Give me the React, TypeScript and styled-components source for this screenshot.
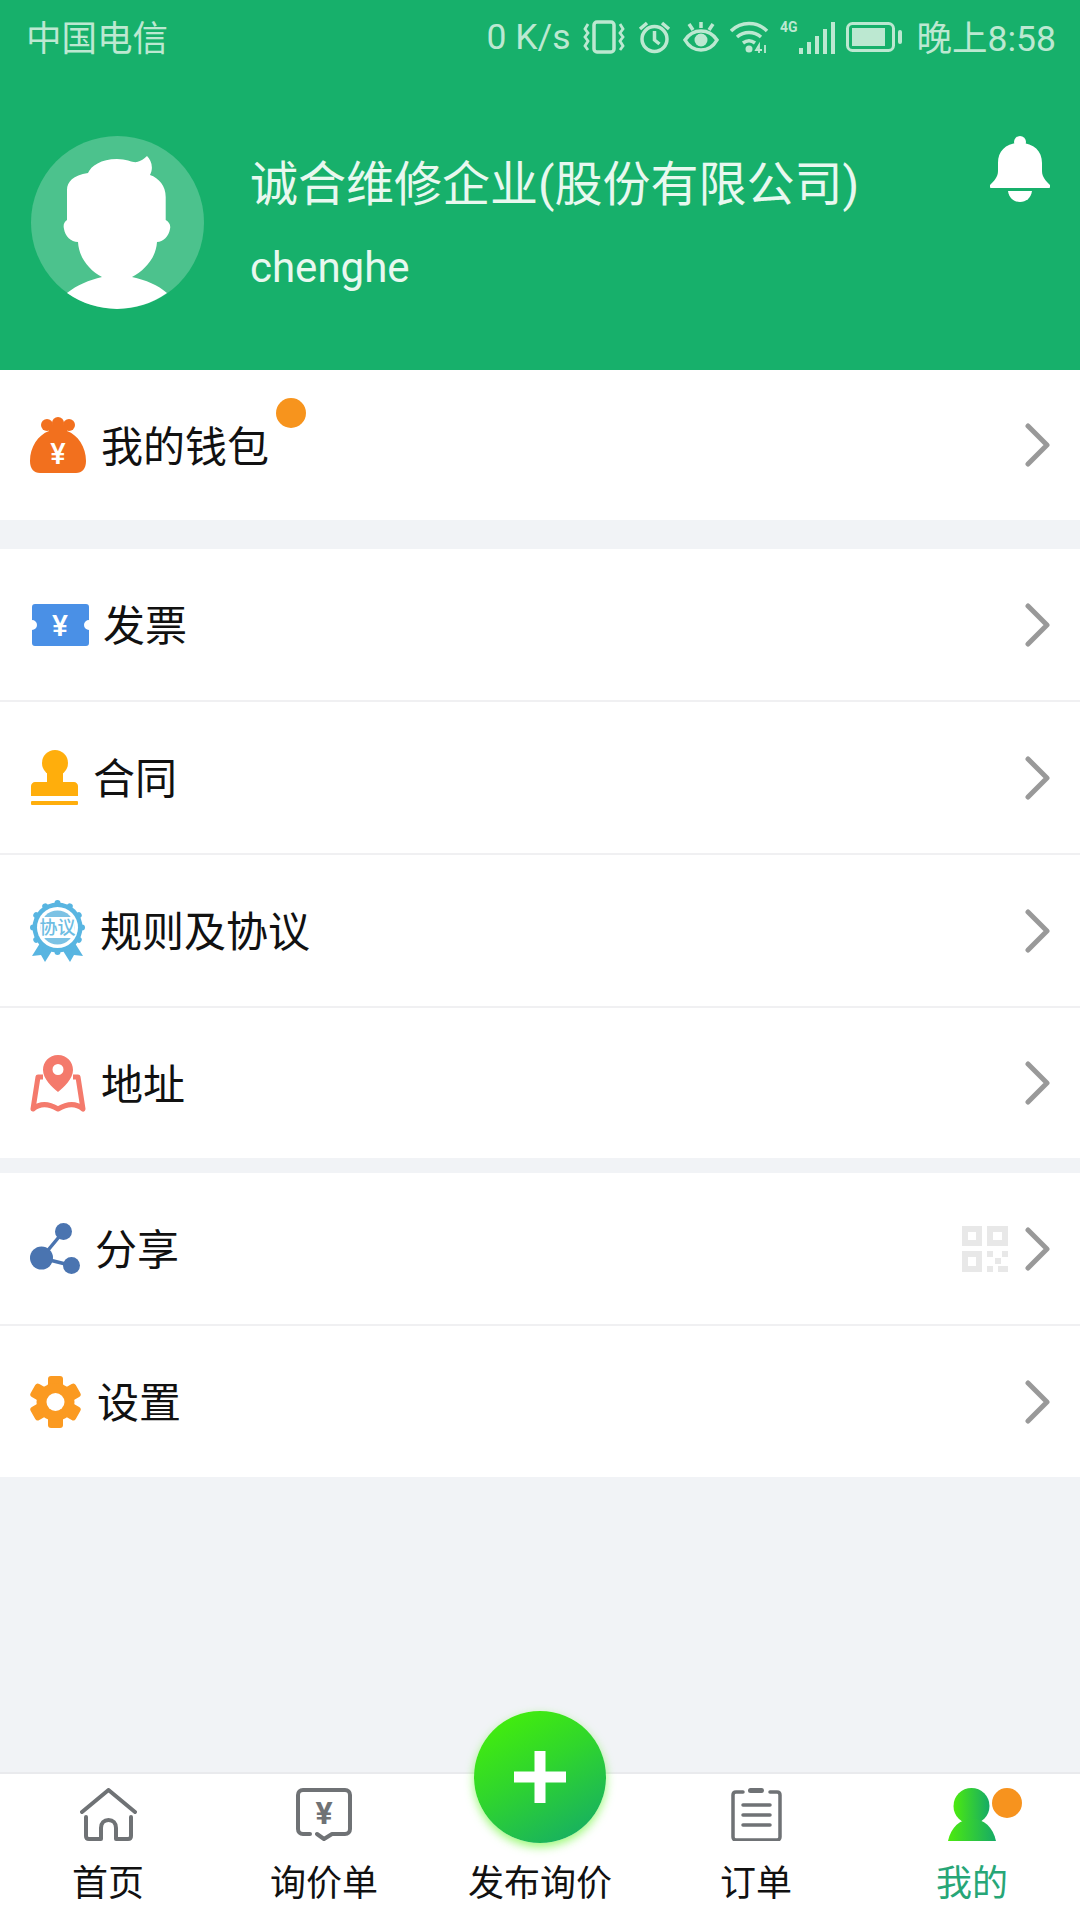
import React from "react";
import styled, { createGlobalStyle } from "styled-components";

const GlobalStyle = createGlobalStyle`
  html, body {
    margin: 0;
    padding: 0;
    background: #f1f3f6;
  }
  * {
    box-sizing: border-box;
  }
`;

const FONT = `Roboto, "Noto Sans CJK SC", sans-serif`;

const Page = styled.div`
  display: flex;
  flex-direction: column;
  width: 1080px;
  height: 1920px;
  overflow: hidden;
  background: #f1f3f6;
  font-family: ${FONT};
`;

const Header = styled.header`
  display: flex;
  flex-direction: column;
  height: 370px;
  background: #17b06b;
`;

const StatusBar = styled.div`
  display: flex;
  align-items: center;
  justify-content: space-between;
  height: 74px;
  padding: 0 24px 0 26px;
  color: #bce8d1;
  font-size: 35.5px;
`;

const StatusRight = styled.div`
  display: flex;
  align-items: center;
  gap: 11px;
`;

const Carrier = styled.span`
  padding-bottom: 4px;
`;

const Clock = styled.span`
  margin-left: 4px;
  padding-bottom: 4px;
`;

const Profile = styled.div`
  display: flex;
  align-items: flex-start;
  padding: 62px 30px 0 31px;
`;

const Names = styled.div`
  display: flex;
  flex-direction: column;
  flex: 1;
  margin-left: 46px;
  color: #e8f8ef;
`;

const CompanyName = styled.div`
  margin-top: 15px;
  font-size: 48px;
  line-height: 68px;
`;

const Account = styled.div`
  margin-top: 23px;
  font-size: 42px;
  line-height: 52px;
`;

const Group = styled.section<{ $gap: number }>`
  margin-top: ${(p) => p.$gap}px;
  background: #fff;
`;

const Row = styled.div<{ $height: number; $divider?: boolean }>`
  display: flex;
  align-items: center;
  height: ${(p) => p.$height}px;
  padding: 0 30px;
  border-bottom: ${(p) => (p.$divider ? "2px solid #f0f0f2" : "none")};
`;

const RowLabel = styled.span<{ $gap: number }>`
  position: relative;
  margin-left: ${(p) => p.$gap}px;
  padding-top: 5px;
  color: #111;
  font-size: 42px;
  line-height: 56px;
`;

const Dot = styled.i`
  position: absolute;
  top: -17px;
  right: -37px;
  width: 30px;
  height: 30px;
  border-radius: 50%;
  background: #f7941d;
`;

const RowEnd = styled.div`
  display: flex;
  align-items: center;
  gap: 17px;
  margin-left: auto;
`;

const Spacer = styled.div`
  flex: 1;
`;

const Nav = styled.nav`
  position: relative;
  display: grid;
  grid-template-columns: repeat(5, 216px);
  height: 148px;
  background: #fff;
  border-top: 2px solid #e9eaed;
`;

const NavItem = styled.div<{ $active?: boolean }>`
  display: flex;
  flex-direction: column;
  align-items: center;
  padding-top: 14px;
  color: ${(p) => (p.$active ? "#27a677" : "#111")};
  font-size: 36px;
`;

const NavIcon = styled.div`
  display: flex;
  justify-content: center;
  height: 53px;
`;

const NavLabel = styled.span`
  margin-top: 19px;
  line-height: 48px;
`;

const Fab = styled.div`
  position: absolute;
  top: -63px;
  left: 474px;
  display: flex;
  align-items: center;
  justify-content: center;
  width: 132px;
  height: 132px;
  border-radius: 50%;
  background: linear-gradient(150deg, #48f404 0%, #30d62c 45%, #12a86c 100%);
  box-shadow: 0 4px 10px rgba(90, 245, 30, 0.6);
`;

const PersonWrap = styled.div`
  position: relative;
  width: 48px;
  height: 53px;
`;

const PersonDot = styled.i`
  position: absolute;
  top: 0;
  left: 44px;
  width: 30px;
  height: 30px;
  border-radius: 50%;
  background: #f7931e;
`;

const Vibrate = () => (
  <svg width="44" height="34" viewBox="0 0 44 34" fill="none" stroke="#bce8d1" strokeWidth="3.5">
    <rect x="12" y="2" width="20" height="30" rx="3" />
    <path d="M6 4 3 9l3 4-3 4 3 4-3 5 3 4M38 4l3 5-3 4 3 4-3 4 3 5-3 4" strokeWidth="2.8" />
  </svg>
);

const Alarm = () => (
  <svg width="35" height="34" viewBox="0 0 35 34" fill="none" stroke="#bce8d1" strokeWidth="3.5">
    <circle cx="17.5" cy="19" r="12.5" />
    <path d="M17.5 11v9l5 4M3 9l7-6M32 9l-7-6" />
  </svg>
);

const Eye = () => (
  <svg width="36" height="34" viewBox="0 0 36 34" fill="none" stroke="#bce8d1" strokeWidth="3.5">
    <path d="M2 20c4-6 9-9 16-9s12 3 16 9c-4 7-9 10-16 10S6 27 2 20Z" />
    <circle cx="18" cy="20" r="6.5" fill="#bce8d1" stroke="none" />
    <path d="M6 4l4 6M30 4l-4 6M18 2v6" />
  </svg>
);

const Wifi = () => (
  <svg width="39" height="34" viewBox="0 0 39 34" fill="none" stroke="#bce8d1" strokeWidth="3.5">
    <path d="M1 11C11 1 27 1 37 11M7 17c7-6 17-6 24 0M13 23c4-3 8-3 12 0" />
    <circle cx="19" cy="29" r="3.5" fill="#bce8d1" stroke="none" />
    <path d="M29 33v-8l-3 5h6M35 25v8" strokeWidth="1.8" />
  </svg>
);

const Signal = () => (
  <svg width="55" height="34" viewBox="0 0 55 34" fill="#bce8d1">
    <text x="0" y="12" fontSize="14" fontWeight="700" fontFamily="Roboto, sans-serif">4G</text>
    <rect x="19" y="28" width="4" height="6" />
    <rect x="27" y="22" width="4" height="12" />
    <rect x="35" y="16" width="4" height="18" />
    <rect x="43" y="9" width="4" height="25" />
    <rect x="51" y="2" width="4" height="32" />
  </svg>
);

const Battery = () => (
  <svg width="56" height="30" viewBox="0 0 56 30" fill="none" stroke="#bce8d1" strokeWidth="3">
    <rect x="1.5" y="1.5" width="46" height="27" rx="5" />
    <rect x="6" y="6" width="33" height="18" fill="#bce8d1" stroke="none" />
    <rect x="52" y="8" width="4" height="14" rx="2" fill="#bce8d1" stroke="none" />
  </svg>
);

const Avatar = () => (
  <svg width="173" height="173" viewBox="0 0 173 173">
    <circle cx="86.5" cy="86.5" r="86.5" fill="#4cc28d" />
    <path
      d="M36 84V54C36 46 42 39 57 37C60 30 70 23 86 23C96 23 102 27 106 26C110 25 113 23 116 20C120 24 123 31 119 39C128 42 134.7 50 134.7 61V84C138 86 140 89 139 93C138 100 132 106 126 106C125 122 114 134 101 141C115 144 127 149 136 157A86.5 86.5 0 0 1 36 157C46 149 58 144 71 141C58 134 48 122 47 106C40 106 34 100 33 93C32 89 33 86 36 84Z"
      fill="#fff"
    />
  </svg>
);

const Bell = () => (
  <svg width="60" height="66" viewBox="0 0 60 66" fill="#fff">
    <circle cx="30" cy="6" r="6" />
    <path d="M30 7C16 7 8 15 8 27v8c0 6-4 10-8 14-1 2 0 3 2 3h56c2 0 3-1 2-3-4-4-8-8-8-14v-8C52 15 44 7 30 7Z" />
    <path d="M18 55h24c-1 7-6 11-12 11s-11-4-12-11Z" />
  </svg>
);

const YenText = ({ x, y, size, fill }: { x: number; y: number; size: number; fill: string }) => (
  <text x={x} y={y} fontSize={size} fontWeight="500" fill={fill} textAnchor="middle" fontFamily="Roboto, sans-serif">
    ¥
  </text>
);

const WalletIcon = () => (
  <svg width="56" height="56" viewBox="0 0 56 56" fill="#f2701e">
    <circle cx="17" cy="8" r="6" />
    <circle cx="28" cy="6" r="6" />
    <circle cx="39" cy="8" r="6" />
    <path d="M18 8h20l-1 6c11 4 19 16 19 30 0 8-4 12-10 12H10C4 56 0 52 0 44c0-14 8-26 19-30Z" />
    <YenText x={28} y={47} size={29} fill="#fff" />
  </svg>
);

const InvoiceIcon = () => (
  <svg width="59" height="42" viewBox="-2 0 59 42" fill="#4a90e6">
    <path d="M3 0h51c2 0 3 1 3 3v13a5 5 0 0 0 0 10v13c0 2-1 3-3 3H3c-2 0-3-1-3-3V26a5 5 0 0 0 0-10V3c0-2 1-3 3-3Z" />
    <YenText x={28} y={32} size={30} fill="#fff" />
  </svg>
);

const StampIcon = () => (
  <svg width="48" height="55" viewBox="-1 0 48 55" fill="#ffae0c">
    <circle cx="24" cy="13" r="13" />
    <path d="M16 20h16v12h11c2 0 4 2 4 4v10H0V36c0-2 2-4 4-4h12Z" />
    <rect y="51" width="47" height="4" rx="1" />
  </svg>
);

const scallops = Array.from({ length: 12 }, (_, i) => i * 30);

const RuleIcon = () => (
  <svg width="55" height="62" viewBox="0 0 55 62">
    <path d="M12 40 2 56l9-1 4 7 10-16ZM43 40l10 16-9-1-4 7-10-16Z" fill="#58b5e1" />
    {scallops.map((deg) => (
      <circle key={deg} cx="27.5" cy="3" r="3" fill="#58b5e1" transform={`rotate(${deg} 27.5 27.5)`} />
    ))}
    <circle cx="27.5" cy="27.5" r="25" fill="#58b5e1" />
    <circle cx="27.5" cy="27.5" r="20.5" fill="#fff" />
    <circle cx="27.5" cy="27.5" r="17" fill="#7cc2e4" />
    <rect x="10.5" y="17" width="34" height="21" fill="#fff" />
    <text
      x="27.5"
      y="34"
      fontSize="18"
      fontWeight="500"
      fill="#6ebde3"
      textAnchor="middle"
      fontFamily="'Noto Sans CJK SC', sans-serif"
    >
      协议
    </text>
  </svg>
);

const AddressIcon = () => (
  <svg width="56" height="57" viewBox="0 0 56 57" fill="none">
    <path
      d="M28 0C19 0 13 7 13 15C13 24 22 32 28 37C34 32 43 24 43 15C43 7 37 0 28 0ZM28 9a5.5 5.5 0 1 1 0 11 5.5 5.5 0 0 1 0-11Z"
      fill="#f47a6c"
      fillRule="evenodd"
    />
    <path
      d="M13 22H8L3 54C10 48 18 48 28 54C38 48 46 48 53 54L48 22H43"
      stroke="#f47a6c"
      strokeWidth="5"
      strokeLinejoin="round"
    />
  </svg>
);

const ShareIcon = () => (
  <svg width="50" height="51" viewBox="0 0 50 51" fill="#4a74b0">
    <path d="M11.5 35 33.5 8.5M11.5 35l30 7.5" stroke="#4a74b0" strokeWidth="3.5" />
    <circle cx="11.5" cy="35" r="11.5" />
    <circle cx="33.5" cy="8.5" r="8.500" />
    <circle cx="41.5" cy="42.5" r="8.500" />
  </svg>
);

const GearIcon = () => (
  <svg width="51" height="52" viewBox="0 0 51 52">
    {[0, 60, 120].map((deg) => (
      <rect key={deg} x="18" y="0" width="15" height="52" rx="3" fill="#fb9a21" transform={`rotate(${deg} 25.5 26)`} />
    ))}
    <circle cx="25.5" cy="26" r="19" fill="#fb9a21" />
    <circle cx="25.5" cy="26" r="9" fill="#fff" />
  </svg>
);

const Chevron = () => (
  <svg width="25" height="44" viewBox="0 0 25 44" fill="none" stroke="#999" strokeWidth="5" strokeLinecap="round" strokeLinejoin="round">
    <path d="M3 3l19 19L3 41" />
  </svg>
);

const QrCode = () => (
  <svg width="46" height="46" viewBox="0 0 46 46" fill="#e8e8e8">
    <path fillRule="evenodd" d="M0 0h20v20H0ZM6 6v8h8V6Z" />
    <path fillRule="evenodd" d="M25 0h21v20H25ZM31 6v8h9V6Z" />
    <path fillRule="evenodd" d="M0 25h20v21H0ZM6 31v9h8v-9Z" />
    <rect x="25" y="25" width="6" height="6" />
    <rect x="40" y="25" width="6" height="6" />
    <rect x="33" y="32" width="6" height="6" />
    <rect x="25" y="40" width="6" height="6" />
    <rect x="36" y="40" width="10" height="6" />
  </svg>
);

const HomeIcon = () => (
  <svg width="57" height="53" viewBox="0 0 57 53" fill="none" stroke="#6f7275" strokeWidth="4" strokeLinecap="round" strokeLinejoin="round">
    <path d="M2 24 28.5 2 55 24" />
    <path d="M6 29v19c0 2 1 3 3 3h12V40c0-5 3-8 7.5-8S36 35 36 40v11h12c2 0 3-1 3-3V29" />
  </svg>
);

const QuoteIcon = () => (
  <svg width="56" height="53" viewBox="0 0 56 53" fill="none" stroke="#6f7275" strokeWidth="4" strokeLinecap="round" strokeLinejoin="round">
    <path d="M14 46H7c-3 0-5-2-5-5V7c0-3 2-5 5-5h42c3 0 5 2 5 5v34c0 3-2 5-5 5H36l-8 5-7-5" />
    <text x="28" y="36" fontSize="32" fontWeight="700" fill="#6f7275" stroke="none" textAnchor="middle" fontFamily="Roboto, sans-serif">
      ¥
    </text>
  </svg>
);

const OrderIcon = () => (
  <svg width="51" height="53" viewBox="0 0 51 53" fill="none" stroke="#6f7275" strokeWidth="3.5" strokeLinecap="round" strokeLinejoin="round">
    <path d="M12 4H5C3 4 2 5 2 7v42c0 2 1 3 3 3h41c2 0 3-1 3-3V7c0-2-1-3-3-3h-7" />
    <rect x="17" y="0" width="16" height="5" rx="2.5" fill="#6f7275" stroke="none" />
    <path d="M12 17h27M12 27h27M12 37h27" />
  </svg>
);

const PersonIcon = () => (
  <svg width="48" height="53" viewBox="0 0 48 53">
    <defs>
      <linearGradient id="person" x1="0" y1="0" x2="1" y2="0">
        <stop offset="0" stopColor="#4cea0e" />
        <stop offset="1" stopColor="#16ab66" />
      </linearGradient>
    </defs>
    <circle cx="23.5" cy="18" r="18" fill="url(#person)" />
    <path d="M0 53c3-14 12-22 24-22s21 8 24 22Z" fill="url(#person)" />
  </svg>
);

const PlusIcon = () => (
  <svg width="52" height="52" viewBox="0 0 52 52" fill="#fff">
    <rect x="20.5" width="11" height="52" />
    <rect y="20.5" width="52" height="11" />
  </svg>
);

type MenuRow = {
  icon: React.ReactNode;
  label: string;
  gap: number;
  height: number;
  divider?: boolean;
  dot?: boolean;
  qr?: boolean;
};

const groups: { gap: number; rows: MenuRow[] }[] = [
  {
    gap: 0,
    rows: [{ icon: <WalletIcon />, label: "我的钱包", gap: 15, height: 150, dot: true }],
  },
  {
    gap: 29,
    rows: [
      { icon: <InvoiceIcon />, label: "发票", gap: 14, height: 153, divider: true },
      { icon: <StampIcon />, label: "合同", gap: 15, height: 153, divider: true },
      { icon: <RuleIcon />, label: "规则及协议", gap: 15, height: 153, divider: true },
      { icon: <AddressIcon />, label: "地址", gap: 15, height: 150 },
    ],
  },
  {
    gap: 15,
    rows: [
      { icon: <ShareIcon />, label: "分享", gap: 15, height: 153, divider: true, qr: true },
      { icon: <GearIcon />, label: "设置", gap: 16, height: 151 },
    ],
  },
];

export default function App() {
  return (
    <Page>
      <GlobalStyle />
      <Header>
        <StatusBar>
          <Carrier>中国电信</Carrier>
          <StatusRight>
            <span>0 K/s</span>
            <Vibrate />
            <Alarm />
            <Eye />
            <Wifi />
            <Signal />
            <Battery />
            <Clock>晚上8:58</Clock>
          </StatusRight>
        </StatusBar>
        <Profile>
          <Avatar />
          <Names>
            <CompanyName>诚合维修企业(股份有限公司)</CompanyName>
            <Account>chenghe</Account>
          </Names>
          <Bell />
        </Profile>
      </Header>

      {groups.map((group) => (
        <Group key={group.rows[0].label} $gap={group.gap}>
          {group.rows.map((row) => (
            <Row key={row.label} $height={row.height} $divider={row.divider}>
              {row.icon}
              <RowLabel $gap={row.gap}>
                {row.label}
                {row.dot && <Dot />}
              </RowLabel>
              <RowEnd>
                {row.qr && <QrCode />}
                <Chevron />
              </RowEnd>
            </Row>
          ))}
        </Group>
      ))}

      <Spacer />

      <Nav>
        <NavItem>
          <NavIcon>
            <HomeIcon />
          </NavIcon>
          <NavLabel>首页</NavLabel>
        </NavItem>
        <NavItem>
          <NavIcon>
            <QuoteIcon />
          </NavIcon>
          <NavLabel>询价单</NavLabel>
        </NavItem>
        <NavItem>
          <NavIcon />
          <NavLabel>发布询价</NavLabel>
        </NavItem>
        <NavItem>
          <NavIcon>
            <OrderIcon />
          </NavIcon>
          <NavLabel>订单</NavLabel>
        </NavItem>
        <NavItem $active>
          <NavIcon>
            <PersonWrap>
              <PersonIcon />
              <PersonDot />
            </PersonWrap>
          </NavIcon>
          <NavLabel>我的</NavLabel>
        </NavItem>
        <Fab>
          <PlusIcon />
        </Fab>
      </Nav>
    </Page>
  );
}
